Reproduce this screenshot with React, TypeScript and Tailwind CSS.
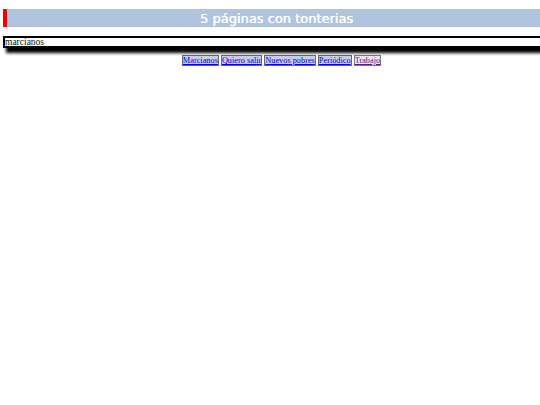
import React from "react";

const links = [
  { label: "Marcianos", visited: false },
  { label: "Quiero salir", visited: false },
  { label: "Nuevos pobres", visited: false },
  { label: "Periódico", visited: false },
  { label: "Trabajo", visited: true },
];

export default function App() {
  return (
    <div className="min-h-[405px] w-[540px] overflow-hidden bg-white">
      {/* Title bar */}
      <div className="ml-[3px] mt-[9px] flex h-[18px] items-center justify-center border-l-4 border-[#ee0000] bg-[#b0c4de]">
        <h1 className="pl-[6px] font-['DejaVu_Sans',sans-serif] text-[13px] font-normal leading-none text-white [text-shadow:0.4px_0_0_#fff]">
          5 páginas con tonterias
        </h1>
      </div>

      {/* Search field */}
      <div className="ml-[3px] mt-[9px] w-[560px]">
        <input
          type="text"
          defaultValue="marcianos"
          className="block h-[12px] w-full border-2 border-black bg-white px-0 font-['Liberation_Serif',serif] text-[9.5px] leading-[8px] text-[#111] shadow-[3px_5px_3px_#000] outline-none"
        />
      </div>

      {/* Nav */}
      <nav className="mt-[7px] flex justify-center gap-[2px] pl-[23px] font-['Liberation_Serif',serif] text-[8.3px] leading-[9px]">
        {links.map((l) => (
          <a
            key={l.label}
            href="#"
            className={`border px-0 underline ${
              l.visited
                ? "border-[#777] bg-[#ece4ee] text-[#551a8b]"
                : "border-[#666] bg-[#c8ccf0] text-[#0000ee]"
            }`}
          >
            {l.label}
          </a>
        ))}
      </nav>
    </div>
  );
}
